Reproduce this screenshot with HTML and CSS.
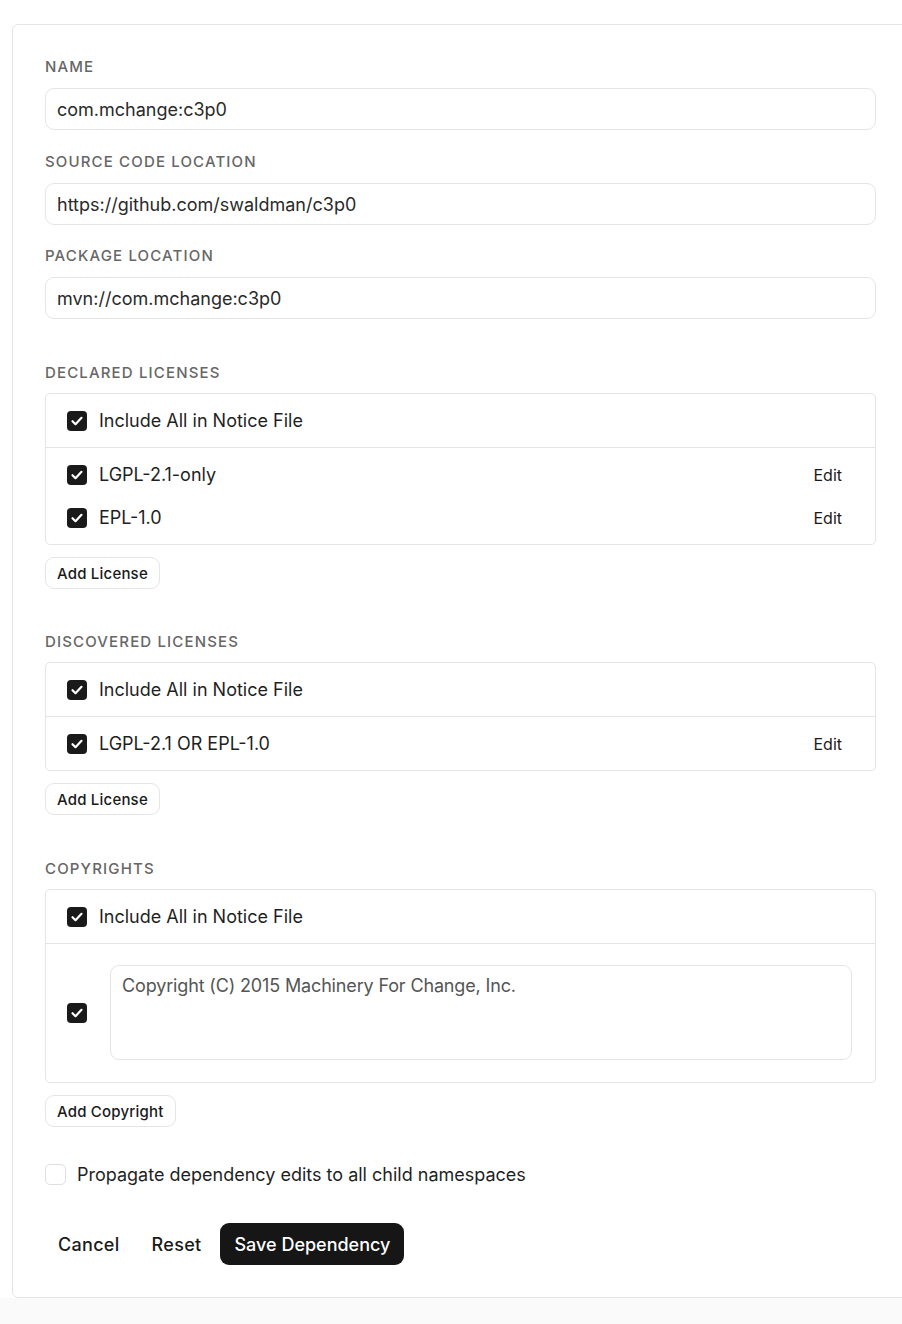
FILE: index.html
```html
<!DOCTYPE html>
<html>
<head>
<meta charset="utf-8">
<link rel="stylesheet" href="styles.css">
</head>
<body>
<div class="page">
  <form class="card">
    <div class="field">
      <label class="label">Name</label>
      <div class="input">com.mchange:c3p0</div>
    </div>
    <div class="field">
      <label class="label">Source Code Location</label>
      <div class="input">https://github.com/swaldman/c3p0</div>
    </div>
    <div class="field">
      <label class="label">Package Location</label>
      <div class="input">mvn://com.mchange:c3p0</div>
    </div>

    <section class="group">
      <div class="label">Declared Licenses</div>
      <div class="box">
        <div class="box-head">
          <span class="check"><svg viewBox="0 0 20 20"><path d="M5.5 10.2l3 3 6-6.4"/></svg></span>
          <span class="text">Include All in Notice File</span>
        </div>
        <div class="box-body">
          <div class="row">
            <span class="check"><svg viewBox="0 0 20 20"><path d="M5.5 10.2l3 3 6-6.4"/></svg></span>
            <span class="text">LGPL-2.1-only</span>
            <button type="button" class="edit">Edit</button>
          </div>
          <div class="row">
            <span class="check"><svg viewBox="0 0 20 20"><path d="M5.5 10.2l3 3 6-6.4"/></svg></span>
            <span class="text">EPL-1.0</span>
            <button type="button" class="edit">Edit</button>
          </div>
        </div>
      </div>
      <button type="button" class="small-btn">Add License</button>
    </section>

    <section class="group">
      <div class="label">Discovered Licenses</div>
      <div class="box">
        <div class="box-head">
          <span class="check"><svg viewBox="0 0 20 20"><path d="M5.5 10.2l3 3 6-6.4"/></svg></span>
          <span class="text">Include All in Notice File</span>
        </div>
        <div class="box-body">
          <div class="row">
            <span class="check"><svg viewBox="0 0 20 20"><path d="M5.5 10.2l3 3 6-6.4"/></svg></span>
            <span class="text">LGPL-2.1 OR EPL-1.0</span>
            <button type="button" class="edit">Edit</button>
          </div>
        </div>
      </div>
      <button type="button" class="small-btn">Add License</button>
    </section>

    <section class="group copyrights">
      <div class="label">Copyrights</div>
      <div class="box">
        <div class="box-head">
          <span class="check"><svg viewBox="0 0 20 20"><path d="M5.5 10.2l3 3 6-6.4"/></svg></span>
          <span class="text">Include All in Notice File</span>
        </div>
        <div class="box-body copy-body">
          <span class="check"><svg viewBox="0 0 20 20"><path d="M5.5 10.2l3 3 6-6.4"/></svg></span>
          <div class="textarea">Copyright (C) 2015 Machinery For Change, Inc.</div>
        </div>
      </div>
      <button type="button" class="small-btn">Add Copyright</button>
    </section>

    <div class="propagate">
      <span class="check empty"></span>
      <span class="text">Propagate dependency edits to all child namespaces</span>
    </div>

    <div class="actions">
      <button type="button" class="ghost">Cancel</button>
      <button type="button" class="ghost">Reset</button>
      <button type="button" class="primary">Save Dependency</button>
    </div>
  </form>
</div>
</body>
</html>
```
FILE: styles.css
```css
html, body {
  margin: 0;
  padding: 0;
}
body {
  background: #fafafa;
  font-family: Inter, "Noto Sans", sans-serif;
  color: #1a1a1a;
  overflow-x: hidden;
}
.page {
  background: #fff;
  padding: 24px 0 0 12px;
  width: 920px;
}
.card {
  display: block;
  box-sizing: border-box;
  width: 897px;
  border: 1px solid #e5e5e5;
  border-radius: 6px;
  padding: 33px 32px 32px 32px;
  background: #fff;
}
.field {
  display: flex;
  flex-direction: column;
  gap: 12px;
  margin-bottom: 23px;
}
.field:nth-child(3) {
  margin-bottom: 0;
}
.field:nth-child(2) .input {
  margin-bottom: -1px;
}
.label {
  display: block;
  font-size: 15px;
  font-weight: 500;
  letter-spacing: 1.15px;
  text-transform: uppercase;
  color: #666;
  line-height: 18px;
}
.input {
  box-sizing: border-box;
  height: 42px;
  border: 1px solid #e5e5e5;
  border-radius: 9px;
  padding: 0 11px;
  display: flex;
  align-items: center;
  font-size: 18px;
  color: #2a2a2a;
}
.group {
  margin-top: 45px;
  display: flex;
  flex-direction: column;
  align-items: flex-start;
}
.group + .group {
  margin-top: 44px;
}
.group + .group.copyrights {
  margin-top: 45px;
}
.group .label {
  margin-bottom: 11px;
}
.box {
  align-self: stretch;
  box-sizing: border-box;
  border: 1px solid #e5e5e5;
  border-radius: 5px;
}
.box-head {
  height: 53px;
  display: flex;
  align-items: center;
  padding: 0 21px;
  gap: 12px;
  border-bottom: 1px solid #e5e5e5;
}
.box-body {
  padding: 5px 21px 5px 21px;
  display: flex;
  flex-direction: column;
}
.row {
  display: flex;
  align-items: center;
  gap: 12px;
  height: 43px;
}
.row .text {
  flex: 1;
}
.text {
  font-size: 18px;
  color: #1f1f1f;
}
.check {
  flex: none;
  width: 20px;
  height: 20px;
  border-radius: 4px;
  background: #1a1a1a;
  display: inline-flex;
  align-items: center;
  justify-content: center;
}
.check svg {
  width: 20px;
  height: 20px;
  fill: none;
  stroke: #fff;
  stroke-width: 2.2;
  stroke-linecap: round;
  stroke-linejoin: round;
}
.check.empty {
  background: #fff;
  box-sizing: border-box;
  width: 21px;
  height: 21px;
  border: 1px solid #e0e0e0;
  border-radius: 5px;
}
.edit {
  background: none;
  border: none;
  font-family: inherit;
  font-size: 16px;
  font-weight: 400;
  color: #1a1a1a;
  padding: 6px 12px;
  cursor: pointer;
}
.small-btn {
  margin-top: 12px;
  box-sizing: border-box;
  height: 32px;
  padding: 0 11px;
  background: #fff;
  border: 1px solid #e5e5e5;
  border-radius: 9px;
  font-family: inherit;
  font-size: 15px;
  letter-spacing: 0.2px;
  font-weight: 500;
  color: #1a1a1a;
}
.copy-body {
  flex-direction: row;
  align-items: center;
  gap: 23px;
  padding: 21px 23px 22px 21px;
}
.textarea {
  flex: 1;
  box-sizing: border-box;
  height: 95px;
  border: 1px solid #e5e5e5;
  border-radius: 9px;
  padding: 9px 11px;
  font-size: 18px;
  letter-spacing: -0.15px;
  color: #555;
  line-height: 22px;
}
.propagate {
  margin-top: 37px;
  display: flex;
  align-items: center;
  gap: 11px;
}
.actions {
  margin-top: 38px;
  display: flex;
  align-items: center;
}
.ghost {
  background: none;
  border: none;
  font-family: inherit;
  font-size: 18px;
  font-weight: 500;
  letter-spacing: 0.3px;
  color: #1a1a1a;
  height: 41px;
  padding: 0 13px;
  margin-right: 6px;
}
.primary {
  background: #161616;
  color: #fff;
  border: none;
  border-radius: 9px;
  height: 42px;
  padding: 0 14px;
  font-family: inherit;
  font-size: 18px;
  font-weight: 500;
}
```
